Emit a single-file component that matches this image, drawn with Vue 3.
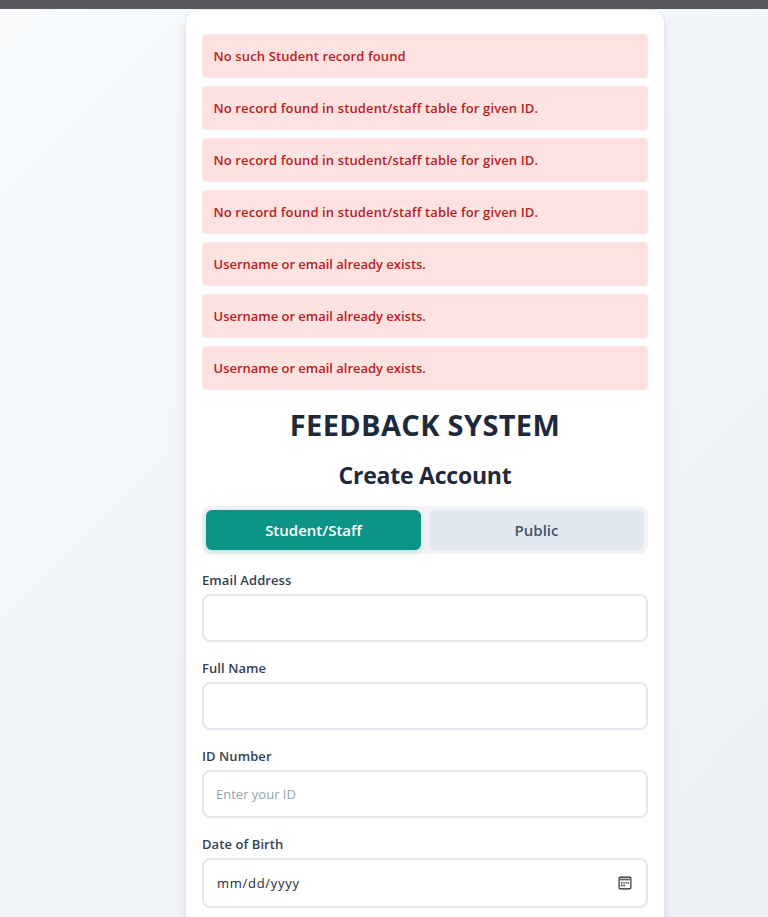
<script setup>
import { ref } from 'vue'

const messages = [
  { text: 'No such Student record found', kind: 'student' },
  { text: 'No record found in student/staff table for given ID.', kind: 'record' },
  { text: 'No record found in student/staff table for given ID.', kind: 'record' },
  { text: 'No record found in student/staff table for given ID.', kind: 'record' },
  { text: 'Username or email already exists.', kind: 'username' },
  { text: 'Username or email already exists.', kind: 'username' },
  { text: 'Username or email already exists.', kind: 'username' },
]
const fields = [
  { id: 'email', label: 'Email Address', placeholder: '' },
  { id: 'name', label: 'Full Name', placeholder: '' },
  { id: 'number', label: 'ID Number', placeholder: 'Enter your ID' },
]
const active = ref('staff')
</script>

<template>
  <div class="page">
    <div class="topbar"></div>
    <main class="card">
      <div class="messages">
        <div v-for="(m, i) in messages" :key="i" class="message" :class="m.kind"><span>{{ m.text }}</span></div>
      </div>
      <h1>FEEDBACK SYSTEM</h1>
      <h2>Create Account</h2>
      <div class="tabs">
        <button type="button" class="tab staff" :class="{ active: active === 'staff' }" @click="active = 'staff'">Student/Staff</button>
        <button type="button" class="tab public" :class="{ active: active === 'public' }" @click="active = 'public'">Public</button>
      </div>
      <div v-for="f in fields" :key="f.id" class="field">
        <label :for="f.id">{{ f.label }}</label>
        <input :id="f.id" type="text" :placeholder="f.placeholder" />
      </div>
      <div class="field">
        <label>Date of Birth</label>
        <div class="date">
          <span>mm/dd/yyyy</span>
          <svg width="14" height="14" viewBox="0 0 14 14">
            <rect x="1.1" y="1.1" width="11.8" height="11.8" rx="1.3" fill="none" stroke="#202020" stroke-width="1.1" />
            <path d="M1.5 3.5H12.5" stroke="#666" stroke-width="1.8" />
            <path d="M3 6.8H4.4M5.4 6.8H6.8M7.8 6.8H9.2M10 6.8H11.2M3 9.5H4.4M5.4 9.5H6.8" stroke="#111" stroke-width="1.3" />
          </svg>
        </div>
      </div>
    </main>
  </div>
</template>

<style>
body {
  overflow: hidden;
}
</style>

<style scoped>
.page {
  box-sizing: border-box;
  width: 768px;
  height: 917px;
  overflow: hidden;
  font-family: "Open Sans", "Noto Sans", sans-serif;
  background: linear-gradient(135deg, #f8fafc 0%, #f3f7fa 25%, #f1f5f9 60%, #eceff4 100%);
}
.page * {
  box-sizing: border-box;
}
.topbar {
  position: relative;
  z-index: 1;
  height: 9px;
  background: #57585c;
}
.card {
  width: 480px;
  height: 960px;
  margin-left: 185px;
  padding: 24px 16px;
  border: 1px solid #e2e8f0;
  border-radius: 12px;
  background: #fff;
  box-shadow: 0 10px 15px -3px rgba(15, 23, 42, 0.1), 0 4px 6px -2px rgba(15, 23, 42, 0.05);
}
.messages {
  display: grid;
  gap: 8px;
}
.message {
  display: flex;
  align-items: center;
  height: 44px;
  padding: 0 11.5px;
  border-radius: 4px;
  background: #fee2e2;
  color: #b91c1c;
  font-size: 13px;
  font-weight: 600;
  white-space: nowrap;
}
.message.student,
.message.record {
  letter-spacing: 0.12px;
}
.message.username {
  letter-spacing: -0.02px;
}
h1,
h2 {
  margin: 0;
  color: #1e293b;
  font-weight: 700;
  text-align: center;
  white-space: nowrap;
}
h1 {
  margin-top: 15px;
  font-size: 29px;
  line-height: 40px;
  letter-spacing: 0.35px;
}
h2 {
  margin-top: 14px;
  font-size: 23px;
  line-height: 32px;
  letter-spacing: -0.22px;
}
.tabs {
  display: grid;
  grid-template-columns: 1fr 1fr;
  gap: 8px;
  height: 48px;
  margin: 15px 0 16px;
  padding: 4px;
  border-radius: 8px;
  background: #f1f3f5;
}
.tab {
  padding: 0;
  border: 0;
  border-radius: 6px;
  background: #e2e8f0;
  color: #475569;
  font: 600 15px "Open Sans", sans-serif;
}
.tab.active {
  background: #0d9488;
  color: #fff;
  box-shadow: 0 2px 6px rgba(13, 148, 136, 0.2);
}
.field {
  margin-bottom: 16px;
}
label {
  display: block;
  height: 20px;
  margin-bottom: 4px;
  color: #334155;
  font-size: 13px;
  font-weight: 600;
  line-height: 20px;
  letter-spacing: 0.08px;
}
input,
.date {
  display: flex;
  width: 100%;
  height: 48px;
  padding: 0 12px;
  border: 2px solid #e2e8f0;
  border-radius: 8px;
  outline: none;
  background: #fff;
  color: #1e293b;
  font: 400 13px "Open Sans", sans-serif;
}
input::placeholder {
  color: #94a3b8;
  opacity: 1;
}
.date {
  align-items: center;
  justify-content: space-between;
  height: 50px;
  padding: 0 14px 0 13px;
  letter-spacing: 0.72px;
}
</style>
